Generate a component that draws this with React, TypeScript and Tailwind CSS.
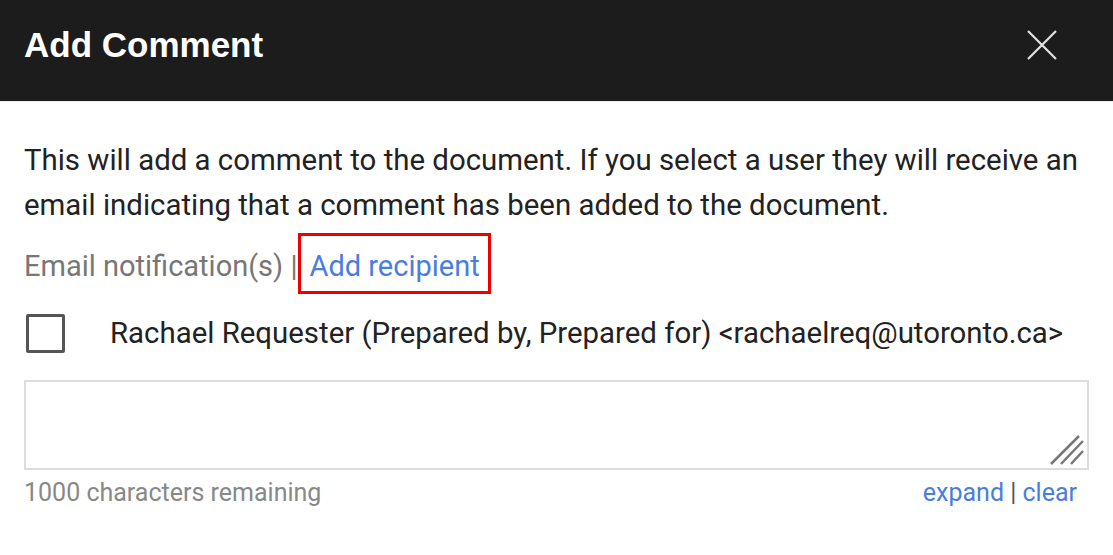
export default function App() {
  return (
    <div className="w-[1113px] h-[555px] bg-white font-['Roboto',sans-serif] overflow-hidden">
      <header className="h-[101px] bg-[#1c1c1c] flex items-center justify-between pl-6 pr-[56px] pb-[12px]">
        <h1 className="font-['Liberation_Sans',Arial,sans-serif] font-bold text-[35px] text-white leading-none">
          Add Comment
        </h1>
        <button className="w-[30px] h-[30px] flex items-center justify-center">
          <svg width="30" height="30" viewBox="0 0 30 30">
            <path d="M1 1 L29 29 M29 1 L1 29" stroke="#e2e2e2" strokeWidth="2.2" />
          </svg>
        </button>
      </header>
      <div className="border-t border-[#e8ecee] px-6 pt-[36px]">
        <p className="text-[29.4px] leading-[45px] text-[#222]">
          This will add a comment to the document. If you select a user they will receive an email indicating that a comment has been added to the document.
        </p>
        <div className="flex items-baseline mt-[5px] text-[29px] text-[#777]">
          <span>Email notification(s) |</span>
          <span className="ml-[1px] border-[3px] border-[#ee0000] px-[8px] pt-[13px] pb-[7px] leading-[35px] text-[#4a7de0]">
            Add recipient
          </span>
        </div>
        <label className="flex items-center mt-[19px]">
          <span className="ml-[2px] w-[39px] h-[39px] border-[3px] border-[#555] rounded-[2px] shrink-0" />
          <span className="ml-[45px] text-[29.4px] leading-[40px] text-[#222] whitespace-nowrap">
            Rachael Requester (Prepared by, Prepared for) &lt;rachaelreq@utoronto.ca&gt;
          </span>
        </label>
        <div className="relative mt-[27px] h-[90px] border-2 border-[#dddddd]">
          <svg className="absolute right-[3px] bottom-[3px]" width="34" height="30" viewBox="0 0 34 30">
            <path d="M1 29 L29 1 M11 29 L33 6 M21 29 L33 16" stroke="#777" strokeWidth="2.5" />
          </svg>
        </div>
        <div className="flex justify-between items-center mt-[4px] pr-[12px] text-[25px] leading-[38px]">
          <span className="text-[#888]">1000 characters remaining</span>
          <span className="text-[#4a7de0]">
            expand <span className="text-[#555]">|</span> clear
          </span>
        </div>
      </div>
    </div>
  );
}
